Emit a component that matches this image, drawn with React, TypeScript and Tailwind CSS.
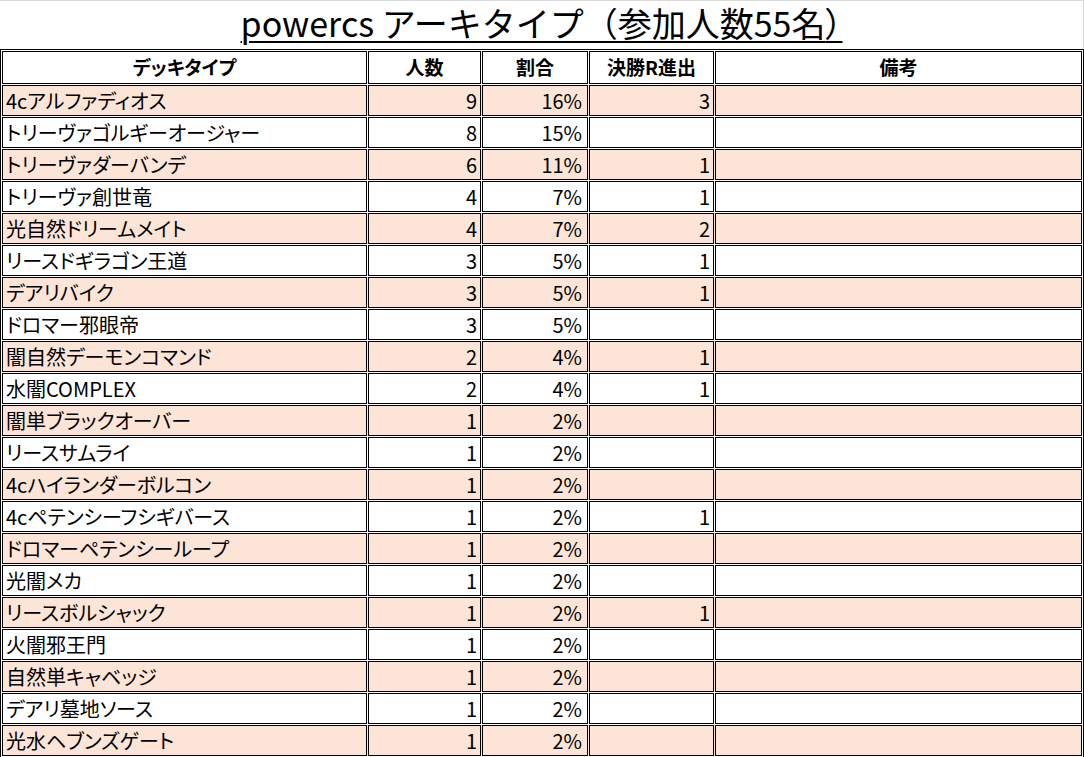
const rows: [string, number, string, number | null][] = [
  ['4cアルファディオス', 9, '16%', 3],
  ['トリーヴァゴルギーオージャー', 8, '15%', null],
  ['トリーヴァダーバンデ', 6, '11%', 1],
  ['トリーヴァ創世竜', 4, '7%', 1],
  ['光自然ドリームメイト', 4, '7%', 2],
  ['リースドギラゴン王道', 3, '5%', 1],
  ['デアリバイク', 3, '5%', 1],
  ['ドロマー邪眼帝', 3, '5%', null],
  ['闇自然デーモンコマンド', 2, '4%', 1],
  ['水闇COMPLEX', 2, '4%', 1],
  ['闇単ブラックオーバー', 1, '2%', null],
  ['リースサムライ', 1, '2%', null],
  ['4cハイランダーボルコン', 1, '2%', null],
  ['4cペテンシーフシギバース', 1, '2%', 1],
  ['ドロマーペテンシーループ', 1, '2%', null],
  ['光闇メカ', 1, '2%', null],
  ['リースボルシャック', 1, '2%', 1],
  ['火闇邪王門', 1, '2%', null],
  ['自然単キャベッジ', 1, '2%', null],
  ['デアリ墓地ソース', 1, '2%', null],
  ['光水ヘブンズゲート', 1, '2%', null],
]

const cell = 'border border-black flex items-center px-[3px] whitespace-nowrap overflow-hidden'

export default function App() {
  return (
    <div className="w-[1084px] h-[757px] bg-white overflow-hidden text-black font-['Noto_Sans_CJK_JP',sans-serif]">
      <div className="h-[49px] border-t border-r border-[#dadada] flex justify-center items-start">
        <h1 className="text-[34px] leading-[44px] underline underline-offset-[4px] decoration-[2px]">
          powercs アーキタイプ（参加人数55名<span className="[font-feature-settings:'palt']">）</span>
        </h1>
      </div>

      <div className="border border-black p-px flex flex-col gap-px [font-feature-settings:'palt']">
        <div className="flex gap-px h-[33px] text-[19px] font-bold">
          <div className={`${cell} w-[365px] justify-center`}>デッキタイプ</div>
          <div className={`${cell} w-[113px] justify-center`}>人数</div>
          <div className={`${cell} w-[106px] justify-center`}>割合</div>
          <div className={`${cell} w-[125px] justify-center`}>決勝R進出</div>
          <div className={`${cell} flex-1 justify-center`}>備考</div>
        </div>

        {rows.map(([name, count, pct, fin], i) => (
          <div key={name} className={`flex gap-px h-[31px] text-[20px] ${i % 2 === 0 ? 'bg-[#fce4d6]' : 'bg-white'}`}>
            <div className={`${cell} w-[365px]`}>{name}</div>
            <div className={`${cell} w-[113px] justify-end`}>{count}</div>
            <div className={`${cell} w-[106px] justify-end pr-[5px]`}>{pct}</div>
            <div className={`${cell} w-[125px] justify-end`}>{fin ?? ''}</div>
            <div className={`${cell} flex-1`}></div>
          </div>
        ))}
      </div>
    </div>
  )
}
